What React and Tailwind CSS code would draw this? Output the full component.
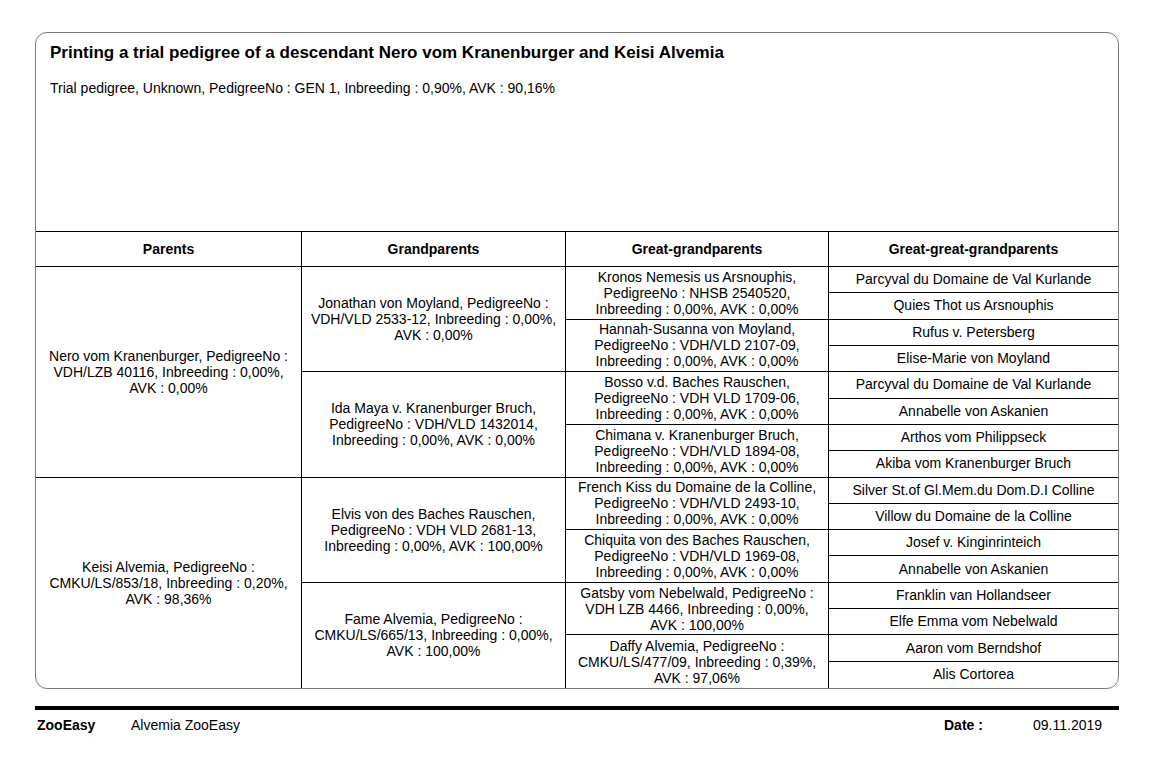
const parents = [
  ["Nero vom Kranenburger, PedigreeNo :", "VDH/LZB 40116, Inbreeding : 0,00%,", "AVK : 0,00%"],
  ["Keisi Alvemia, PedigreeNo :", "CMKU/LS/853/18, Inbreeding : 0,20%,", "AVK : 98,36%"],
];

const grandparents = [
  ["Jonathan von Moyland, PedigreeNo :", "VDH/VLD 2533-12, Inbreeding : 0,00%,", "AVK : 0,00%"],
  ["Ida Maya v. Kranenburger Bruch,", "PedigreeNo : VDH/VLD 1432014,", "Inbreeding : 0,00%, AVK : 0,00%"],
  ["Elvis von des Baches Rauschen,", "PedigreeNo : VDH VLD 2681-13,", "Inbreeding : 0,00%, AVK : 100,00%"],
  ["Fame Alvemia, PedigreeNo :", "CMKU/LS/665/13, Inbreeding : 0,00%,", "AVK : 100,00%"],
];

const greatGrandparents = [
  ["Kronos Nemesis us Arsnouphis,", "PedigreeNo : NHSB 2540520,", "Inbreeding : 0,00%, AVK : 0,00%"],
  ["Hannah-Susanna von Moyland,", "PedigreeNo : VDH/VLD 2107-09,", "Inbreeding : 0,00%, AVK : 0,00%"],
  ["Bosso v.d. Baches Rauschen,", "PedigreeNo : VDH VLD 1709-06,", "Inbreeding : 0,00%, AVK : 0,00%"],
  ["Chimana v. Kranenburger Bruch,", "PedigreeNo : VDH/VLD 1894-08,", "Inbreeding : 0,00%, AVK : 0,00%"],
  ["French Kiss du Domaine de la Colline,", "PedigreeNo : VDH/VLD 2493-10,", "Inbreeding : 0,00%, AVK : 0,00%"],
  ["Chiquita von des Baches Rauschen,", "PedigreeNo : VDH/VLD 1969-08,", "Inbreeding : 0,00%, AVK : 0,00%"],
  ["Gatsby vom Nebelwald, PedigreeNo :", "VDH LZB 4466, Inbreeding : 0,00%,", "AVK : 100,00%"],
  ["Daffy Alvemia, PedigreeNo :", "CMKU/LS/477/09, Inbreeding : 0,39%,", "AVK : 97,06%"],
];

const greatGreat = [
  "Parcyval du Domaine de Val Kurlande",
  "Quies Thot us Arsnouphis",
  "Rufus v. Petersberg",
  "Elise-Marie von Moyland",
  "Parcyval du Domaine de Val Kurlande",
  "Annabelle von Askanien",
  "Arthos vom Philippseck",
  "Akiba vom Kranenburger Bruch",
  "Silver St.of Gl.Mem.du Dom.D.I Colline",
  "Villow du Domaine de la Colline",
  "Josef v. Kinginrinteich",
  "Annabelle von Askanien",
  "Franklin van Hollandseer",
  "Elfe Emma vom Nebelwald",
  "Aaron vom Berndshof",
  "Alis Cortorea",
];

const rowStart = [
  "row-start-2", "row-start-3", "row-start-4", "row-start-5", "row-start-6", "row-start-7",
  "row-start-8", "row-start-9", "row-start-10", "row-start-11", "row-start-12", "row-start-13",
  "row-start-14", "row-start-15", "row-start-16", "row-start-17",
];

function Lines({ lines }) {
  return (
    <div className="leading-[16px]">
      {lines.map((l, i) => (
        <div key={i} className="whitespace-nowrap">{l}</div>
      ))}
    </div>
  );
}

export default function App() {
  return (
    <div className="w-[1167px] h-[757px] bg-white text-black font-['Liberation_Sans',Arial,sans-serif] pt-[32px] pl-[35px]">
      <div className="w-[1084px] h-[657px] border border-[#7a7a7a] rounded-[12px] overflow-hidden flex flex-col">
        <div className="h-[199px] border-b border-black px-[14px] pt-[10px] shrink-0">
          <h1 className="text-[17px] font-bold leading-[20px]">
            Printing a trial pedigree of a descendant Nero vom Kranenburger and Keisi Alvemia
          </h1>
          <p className="text-[14px] mt-[17px] leading-[16px]">
            Trial pedigree, Unknown, PedigreeNo : GEN 1, Inbreeding : 0,90%, AVK : 90,16%
          </p>
        </div>

        <div className="flex-1 grid grid-cols-[266px_264px_263px_1fr] grid-rows-[35px_repeat(16,1fr)] text-[14px] text-center">
          <div className="col-start-1 row-start-1 border-r border-b border-black flex items-center justify-center font-bold">Parents</div>
          <div className="col-start-2 row-start-1 border-r border-b border-black flex items-center justify-center font-bold">Grandparents</div>
          <div className="col-start-3 row-start-1 border-r border-b border-black flex items-center justify-center font-bold">Great-grandparents</div>
          <div className="col-start-4 row-start-1 border-b border-black flex items-center justify-center font-bold">Great-great-grandparents</div>

          {parents.map((p, i) => (
            <div
              key={"p" + i}
              className={
                "col-start-1 row-span-8 border-r border-black flex items-center justify-center " +
                (i === 0 ? "row-start-2 border-b" : "row-start-10")
              }
            >
              <Lines lines={p} />
            </div>
          ))}

          {grandparents.map((g, i) => (
            <div
              key={"g" + i}
              className={
                "col-start-2 row-span-4 border-r border-black flex items-center justify-center " +
                rowStart[i * 4] +
                (i < 3 ? " border-b" : "")
              }
            >
              <Lines lines={g} />
            </div>
          ))}

          {greatGrandparents.map((g, i) => (
            <div
              key={"gg" + i}
              className={
                "col-start-3 row-span-2 border-r border-black flex items-center justify-center " +
                rowStart[i * 2] +
                (i < 7 ? " border-b" : "")
              }
            >
              <Lines lines={g} />
            </div>
          ))}

          {greatGreat.map((n, i) => (
            <div
              key={"ggg" + i}
              className={
                "col-start-4 flex items-center justify-center whitespace-nowrap " +
                rowStart[i] +
                (i < 15 ? " border-b border-black" : "")
              }
            >
              {n}
            </div>
          ))}
        </div>
      </div>

      <div className="w-[1084px] mt-[17px] border-t-[4px] border-black">
        <div className="flex items-center pt-[7px] text-[14px] leading-[16px]">
          <span className="font-bold w-[96px] pl-[2px]">ZooEasy</span>
          <span>Alvemia ZooEasy</span>
          <span className="ml-auto font-bold w-[89px]">Date :</span>
          <span className="w-[86px]">09.11.2019</span>
        </div>
      </div>
    </div>
  );
}
